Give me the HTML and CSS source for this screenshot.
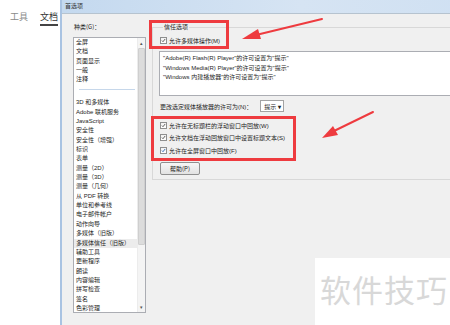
FILE: index.html
```html
<!DOCTYPE html>
<html lang="zh-CN">
  <head>
    <meta charset="UTF-8" />
    <title>首选项</title>
    <link rel="stylesheet" href="styles.css">
  </head>
  <body>
    <div class="screen">
      <div class="app">
        <div class="tabs">
          <span class="tab">工具</span>
          <span class="tab active">文档</span>
        </div>
      </div>

      <div class="dialog">
        <div class="titlebar">首选项</div>
        <div class="dlg-body">
          <div class="cat-col">
            <div class="cat-label">种类(G)：</div>
            <div class="cat-list">
              <ul class="cat-items">
                <li>全屏</li>
                <li>文档</li>
                <li>页面显示</li>
                <li>一般</li>
                <li>注释</li>
                <li class="sep"></li>
                <li>3D 和多媒体</li>
                <li>Adobe 联机服务</li>
                <li>JavaScript</li>
                <li>安全性</li>
                <li>安全性（增强）</li>
                <li>标识</li>
                <li>表单</li>
                <li>测量（2D）</li>
                <li>测量（3D）</li>
                <li>测量（几何）</li>
                <li>从 PDF 转换</li>
                <li>单位和参考线</li>
                <li>电子邮件帐户</li>
                <li>动作向导</li>
                <li>多媒体（旧版）</li>
                <li class="selected">多媒体信任（旧版）</li>
                <li>辅助工具</li>
                <li>更新程序</li>
                <li>朗读</li>
                <li>内容编辑</li>
                <li>拼写检查</li>
                <li>签名</li>
                <li>色彩管理</li>
                <li>身份信息</li>
              </ul>
              <div class="scrollbar">
                <span class="sb-arrow">▴</span>
                <div class="sb-thumb"></div>
                <span class="sb-arrow sb-down">▾</span>
              </div>
            </div>
          </div>

          <div class="settings">
            <fieldset class="group">
              <legend>信任选项</legend>
              <label class="opt first">
                <span class="check"><svg viewBox="0 0 7 7"><path d="M1.3 3.6 L2.8 5.2 L5.8 1.4" /></svg></span>
                允许多媒体操作(M)
              </label>
              <div class="perm-box">
                <div>"Adobe(R) Flash(R) Player"的许可设置为"提示"</div>
                <div>"Windows Media(R) Player"的许可设置为"提示"</div>
                <div>"Windows 内建播放器"的许可设置为"提示"</div>
              </div>
              <div class="perm-row">
                <span>更改选定媒体播放器的许可为(N)：</span>
                <span class="select">提示 <b>▾</b></span>
              </div>
              <div class="opts">
                <label class="opt">
                  <span class="check"><svg viewBox="0 0 7 7"><path d="M1.3 3.6 L2.8 5.2 L5.8 1.4" /></svg></span>
                  允许在无标题栏的浮动窗口中回放(W)
                </label>
                <label class="opt">
                  <span class="check"><svg viewBox="0 0 7 7"><path d="M1.3 3.6 L2.8 5.2 L5.8 1.4" /></svg></span>
                  允许文档在浮动回放窗口中设置标题文本(S)
                </label>
                <label class="opt">
                  <span class="check blue"><svg viewBox="0 0 7 7"><path d="M1.3 3.6 L2.8 5.2 L5.8 1.4" /></svg></span>
                  允许在全屏窗口中回放(F)
                </label>
              </div>
              <button class="help-btn">帮助(P)</button>
            </fieldset>
          </div>
        </div>
      </div>

      <!-- annotations drawn over the screenshot -->
      <div class="mark mark-top"></div>
      <div class="mark mark-bottom"></div>
      <svg class="arrows" viewBox="0 0 450 325">
        <line x1="322" y1="19" x2="256" y2="35" />
        <polygon points="242,39 258,29 261,39" />
        <line x1="373" y1="112" x2="334" y2="131" />
        <polygon points="322,138 333,126 338,135" />
      </svg>
      <div class="watermark">软件技巧</div>
    </div>
  </body>
</html>
```

FILE: styles.css
```css
:root {
  --dlg-bg: #f0f0f0;
  --border: #abadb3;
  --mark-red: #ee3b3f;
  --text: #1e1e1e;
}

* {
  box-sizing: border-box;
}

body {
  margin: 0;
  font-family: "Liberation Sans", "Noto Sans CJK SC", sans-serif;
  color: var(--text);
  background: #fff;
}

.screen {
  position: relative;
  width: 450px;
  height: 325px;
  overflow: hidden;
  display: flex;
}

/* app behind the dialog */
.app {
  width: 60px;
  flex: none;
  background: #fff;
}

.tabs {
  display: flex;
  gap: 12px;
  padding: 11px 0 0 10px;
  font-family: "Noto Sans CJK SC", sans-serif;
  font-size: 9px;
  line-height: 12px;
}

.tab {
  color: #8a8a8a;
  padding-bottom: 1px;
}

.tab.active {
  color: #333;
  border-bottom: 2px solid #444;
}

/* dialog */
.dialog {
  flex: none;
  width: 600px;
  background: var(--dlg-bg);
  border-left: 2px solid #a9c3e2;
  display: flex;
  flex-direction: column;
}

.titlebar {
  height: 14px;
  padding-left: 3px;
  font-family: "Noto Sans CJK SC", sans-serif;
  font-size: 6px;
  line-height: 12px;
  color: #333;
  background: linear-gradient(90deg, #c4d9ef, #d6e4f3 40%, #cfe0f2 70%, #dbe7f4);
  border-bottom: 1px solid #b6c3cf;
}

.dlg-body {
  display: flex;
  padding: 8px 0 0 11px;
  flex: 1;
}

.cat-col {
  width: 73px;
  flex: none;
}

.cat-label {
  font-family: "Noto Sans CJK SC", sans-serif;
  font-size: 6px;
  line-height: 10px;
  padding-left: 1px;
  margin-bottom: 5px;
}

.cat-list {
  display: flex;
  height: 276px;
  border: 1px solid var(--border);
  background: #fff;
  overflow: hidden;
}

.cat-items {
  list-style: none;
  margin: 0;
  padding: 0;
  flex: 1;
  font-family: "Liberation Sans", "Noto Sans CJK SC", sans-serif;
  font-size: 6px;
  line-height: 9.36px;
}

.cat-items li {
  padding-left: 2px;
  white-space: nowrap;
  height: 9.36px;
}

.cat-items li.sep {
  position: relative;
}

.cat-items li.sep::after {
  content: "";
  display: block;
  margin: 4px 0 0 3px;
  width: 56px;
  height: 1px;
  background: #c6d7ea;
}

.cat-items li.selected {
  background: #ececec;
}

.scrollbar {
  width: 8px;
  flex: none;
  background: #f4f4f4;
  border-left: 1px solid #ececec;
  display: flex;
  flex-direction: column;
  align-items: center;
  font-size: 5px;
  color: #555;
}

.sb-arrow {
  height: 8px;
  line-height: 10px;
}

.sb-down {
  margin-top: auto;
  line-height: 6px;
}

.sb-thumb {
  width: 7px;
  height: 197px;
  margin-top: 2px;
  background: #dcdcdc;
  border: 1px solid #cfcfcf;
  border-radius: 1px;
}

/* right side */
.settings {
  flex: 1;
  padding-left: 6px;
}

.group {
  margin: 0;
  padding: 0 0 6px 7px;
  min-width: 0;
  height: 158px;
  border: 1px solid #d8d8d8;
  border-right: none;
  font-family: "Liberation Sans", "Noto Sans CJK SC", sans-serif;
  font-size: 6px;
}

.group legend {
  padding: 0 1px;
  margin-left: 3px;
  font-family: "Noto Sans CJK SC", sans-serif;
  line-height: 10px;
}

.opt {
  display: flex;
  align-items: center;
  gap: 2px;
  height: 12.5px;
  white-space: nowrap;
}

.opt.first {
  height: 10px;
  margin-top: 3px;
}

.check {
  width: 7px;
  height: 7px;
  flex: none;
  border: 1px solid #8e8f8f;
  background: linear-gradient(#f2f2f2, #ffffff);
  display: flex;
}

.check svg {
  width: 100%;
  height: 100%;
  fill: none;
  stroke: #4a4a4a;
  stroke-width: 1.2;
}

.check.blue svg {
  stroke: #1f5fb0;
}

.perm-box {
  margin: 6px 0 0 -1px;
  height: 45px;
  padding: 2px 0 0 3px;
  background: #fff;
  border: 1px solid var(--border);
  line-height: 9.5px;
  white-space: nowrap;
}

.perm-row {
  display: flex;
  align-items: center;
  gap: 8px;
  height: 12px;
  margin-top: 4px;
  white-space: nowrap;
}

.select {
  display: flex;
  align-items: center;
  justify-content: space-between;
  width: 24px;
  height: 12px;
  padding: 0 2px 0 3px;
  background: #fff;
  border: 1px solid #a3a3a3;
  font-family: "Noto Sans CJK SC", sans-serif;
}

.select b {
  font-size: 6px;
  color: #222;
}

.opts {
  margin-top: 7px;
}

.help-btn {
  display: block;
  margin-top: 5px;
  width: 40px;
  height: 13px;
  padding: 0;
  font-family: "Noto Sans CJK SC", sans-serif;
  font-size: 6px;
  color: #222;
  border: 1px solid #8f8f8f;
  border-radius: 2px;
  background: linear-gradient(#f6f6f6, #e2e2e2);
}

/* red annotation boxes and arrows */
.mark {
  position: absolute;
  border: 3px solid var(--mark-red);
}

.mark-top {
  left: 149px;
  top: 20px;
  width: 80px;
  height: 29px;
}

.mark-bottom {
  left: 151px;
  top: 116px;
  width: 145px;
  height: 45px;
}

.arrows {
  position: absolute;
  left: 0;
  top: 0;
  width: 450px;
  height: 325px;
}

.arrows line {
  stroke: var(--mark-red);
  stroke-width: 2;
  stroke-linecap: round;
}

.arrows polygon {
  fill: var(--mark-red);
}

.watermark {
  position: absolute;
  left: 315px;
  top: 258px;
  width: 135px;
  height: 67px;
  background: #fff;
  font-family: "Noto Sans CJK SC", sans-serif;
  font-size: 31px;
  letter-spacing: 1px;
  line-height: 62px;
  padding-left: 5px;
  color: #d8d8d8;
}
```
